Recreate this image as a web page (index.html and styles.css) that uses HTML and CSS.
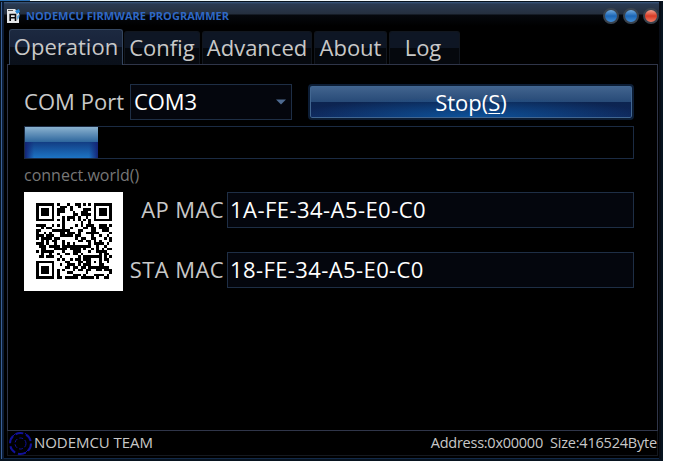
FILE: index.html
```html
<!DOCTYPE html>
<html lang="en">
<head>
<meta charset="utf-8">
<title>NODEMCU FIRMWARE PROGRAMMER</title>
<link rel="stylesheet" href="styles.css">
</head>
<body>
<div class="desktop"></div>
<main class="window">
  <header class="titlebar">
    <svg class="app-icon" width="14" height="15" viewBox="0 0 14 15">
      <path fill="#e4e6e8" d="M0 0h8l4 4v10H0z"/>
      <path fill="#2686d6" d="M8 2l4-2 1 3-3 2z"/>
      <path fill="#65a9dc" d="M10 7l3-2-1 4-2 2z"/>
      <path stroke="#555" d="M1 1.5h5" fill="none"/>
      <path stroke="#08090c" stroke-width="1.6" d="M3.2 12V5.5h5.3V12M3 8.8h5.5" fill="none"/>
    </svg>
    <h1 class="title">NODEMCU FIRMWARE PROGRAMMER</h1>
    <div class="controls"><i class="dot"></i><i class="dot"></i><i class="dot dot-close"></i></div>
  </header>
  <nav class="tabs">
    <span class="tab tab-active">Operation</span>
    <span class="tab tab-config">Config</span>
    <span class="tab tab-advanced">Advanced</span>
    <span class="tab tab-about">About</span>
    <span class="tab tab-log">Log</span>
  </nav>
  <section class="panel">
    <div class="port-row">
      <label class="port-label">COM Port</label>
      <div class="field select"><span class="com">COM3</span><svg width="10" height="6" viewBox="0 0 10 6"><path d="M0 0.5h10L5 5.5z" fill="#4e6a90"/></svg></div>
      <button class="stop">Stop(<u>S</u>)</button>
    </div>
    <div class="progress"><div class="bar"></div></div>
    <p class="message">connect.world()</p>
    <div class="device">
      <div class="qr"><svg id="qr" width="76" height="76" viewBox="0 0 29 29" shape-rendering="crispEdges"><path fill="#000"/></svg></div>
      <div class="macs">
        <div class="mac-row"><label class="ap">AP MAC</label><div class="field mac">1A-FE-34-A5-E0-C0</div></div>
        <div class="mac-row"><label>STA MAC</label><div class="field mac sta">18-FE-34-A5-E0-C0</div></div>
      </div>
    </div>
  </section>
  <footer class="status">
    <svg class="logo" width="25" height="25" viewBox="0 0 25 25" fill="none" stroke="#11119a">
      <circle cx="12.5" cy="12.5" r="10.5" stroke-width="2" stroke-dasharray="8 3"/>
      <circle cx="12.5" cy="12.5" r="5.5" stroke-dasharray="4 2"/>
      <path d="M2 8l5-5M17 2l5 6M22 17l-5 5M7 22l-5-5"/>
    </svg>
    <span class="team">NODEMCU TEAM</span>
    <span class="address">Address:0x00000</span>
    <span class="size">Size:416524Byte</span>
  </footer>
</main>
<script src="qr.js"></script>
</body>
</html>
```
FILE: styles.css
```css
* { box-sizing: border-box; }
body {
  margin: 0;
  width: 673px;
  height: 461px;
  overflow: hidden;
  background: #fff;
  font-family: "Open Sans", "Noto Sans", sans-serif;
  font-size: 22px;
  color: #c8c8c8;
}
.desktop { height: 1px; background: linear-gradient(90deg, #2c70b4 30px, #e6f3f8 30px, #fff 663px); }
.window {
  display: flex;
  flex-direction: column;
  width: 663px;
  height: 460px;
  padding: 0 3px 3px 6px;
  border: solid #07131f;
  border-width: 1px 2px 2px 1px;
  background: linear-gradient(#3b5a83 0, #2a3a52 2px, #252f3e 12px, #05080d 13px, #000 24px);
  box-shadow: inset 1px 0 #3a5f96, inset 3px 0 #0c1c34, inset -2px 0 #080d16, inset 0 -1px #122948;
}
.titlebar { display: flex; align-items: center; height: 27px; flex: none; }
.app-icon { margin: 1px 0 0; }
.title {
  flex: 1;
  margin: 0 0 0 5px;
  font-size: 11px;
  font-weight: 700;
  letter-spacing: .03px;
  color: #2f68c4;
  white-space: nowrap;
}
.controls { display: flex; gap: 4px; }
.dot {
  width: 16px;
  height: 16px;
  border: 2px solid #3a434e;
  border-radius: 50%;
  background: linear-gradient(#73abdf, #1c66b6 50%, #428dd6);
}
.dot:first-child { margin-left: 0; }
.controls { margin-right: -1px; }
.dot-close { background: linear-gradient(#f3a18f, #d93b25 50%, #f17c66); }
.tabs { display: flex; align-items: flex-end; height: 35px; gap: 2px; padding-left: 2px; line-height: 30px; flex: none; }
.tab {
  height: 33px;
  text-align: center;
  white-space: nowrap;
  border: 1px solid #11161e;
  border-bottom: 0;
  border-radius: 3px 3px 0 0;
  background: linear-gradient(#0e1624 50%, #05080d 50%);
}
.tab-active {
  width: 114px;
  height: 36px;
  margin-bottom: -1px;
  line-height: 32px;
  border-color: #34465f;
  background: linear-gradient(#1c2940 0, #18233a 50%, #0b111c 50%, #0a101a);
  z-index: 1;
}
.tab-config { width: 76px; margin-left: -1px; }
.tab-advanced { width: 110px; }
.tab-about { width: 73px; }
.tab-log { width: 71px; padding-right: 3px; }
.panel { flex: 1; padding: 19px 23px 0 16px; border: 1px solid #2f3549; min-height: 0; }
.port-row { display: flex; height: 36px; }
.port-label { width: 106px; line-height: 35px; letter-spacing: .05px; }
.field { height: 36px; border: 1px solid #1e2e45; background: #04060d; color: #fff; line-height: 33px; padding-left: 3px; white-space: nowrap; }
.select { display: flex; align-items: center; justify-content: space-between; width: 162px; padding-right: 5px; }
.com { letter-spacing: -.1px; margin-top: -2px; }
.stop {
  width: 326px;
  height: 36px;
  margin-left: 16px;
  padding: 0 0 1px;
  border: 2px solid #0c1d35;
  border-radius: 4px;
  font: inherit;
  line-height: 30px;
  color: #fff;
  background: radial-gradient(ellipse 55% 65% at 50% 100%, #0d549c, transparent), linear-gradient(#43658f, #274a77 50%, #0c2450 50%, #10265a);
  box-shadow: inset 0 0 0 1px #416691;
}
.stop u { text-decoration-thickness: 1px; text-underline-offset: 2px; }
.progress { height: 33px; margin-top: 6px; border: 1px solid #1b2b43; }
.bar {
  width: 73px;
  height: 31px;
  background: linear-gradient(#8bb2cf, #2d669d 15px, transparent 15px), linear-gradient(90deg, #142476, transparent 9px 64px, #142476), linear-gradient(#123d83 15px, #1d74c4);
}
.message { margin: 4px 0 0; height: 29px; font-size: 16px; line-height: 25px; color: #777; }
.device { display: flex; }
.qr { width: 99px; height: 99px; padding: 11px 12px; background: #fff; }
.qr svg { display: block; }
.macs { flex: 1; display: flex; flex-direction: column; gap: 24px; }
.mac-row { display: flex; justify-content: flex-end; line-height: 34px; letter-spacing: .4px; white-space: nowrap; }
.mac-row label { margin-right: 3px; }
.mac { width: 407px; padding-left: 2px; letter-spacing: .45px; }
.sta { letter-spacing: .4px; }
.status { display: flex; align-items: center; height: 25px; flex: none; border: solid #14181f; border-width: 0 1px 1px; font-size: 15px; }
.status span { position: relative; top: -1px; }
.team { margin: 0 auto 0 1px; letter-spacing: -.05px; }
.address { font-size: 14.5px; letter-spacing: -.25px; margin-right: 7px; }
.size { font-size: 14.5px; letter-spacing: -.2px; }
```
FILE: qr.js
```js
// Version 3-L QR symbol (29x29), byte mode.
(function () {
  var text = "AP MAC:1A-FE-34-A5-E0-C0 STA MAC:18-FE-34-A5-E0-C0";
  var N = 29, DATA = 55, EC = 15, i, j, x, y;
  var bits = [];
  function push(v, n) { for (var k = n - 1; k >= 0; k--) bits.push((v >> k) & 1); }
  push(4, 4); push(text.length, 8);
  for (i = 0; i < text.length; i++) push(text.charCodeAt(i), 8);
  push(0, 4);
  for (var p = 0; bits.length < DATA * 8; p ^= 1) push(p ? 17 : 236, 8);
  var data = [];
  for (i = 0; i < bits.length; i += 8) data.push(parseInt(bits.slice(i, i + 8).join(""), 2));
  function mul(a, b) { var r = 0; for (; b; b >>= 1) { if (b & 1) r ^= a; a = (a << 1) ^ (a & 128 ? 285 : 0); } return r; }
  var gen = [1], root = 1;
  for (i = 0; i < EC; i++) {
    var next = gen.concat(0);
    for (j = 0; j < gen.length; j++) next[j + 1] ^= mul(gen[j], root);
    gen = next; root = mul(root, 2);
  }
  var rem = data.concat(new Array(EC).fill(0));
  for (i = 0; i < DATA; i++) { var f = rem[i]; for (j = 0; j <= EC; j++) rem[i + j] ^= mul(gen[j], f); }
  var words = data.concat(rem.slice(DATA));
  function build(mask) {
    var m = [], fixed = [];
    for (y = 0; y < N; y++) { m.push(new Array(N).fill(0)); fixed.push(new Array(N).fill(0)); }
    function set(a, b, v) { if (a >= 0 && b >= 0 && a < N && b < N) { m[b][a] = v ? 1 : 0; fixed[b][a] = 1; } }
    for (i = 0; i < N; i++) { set(6, i, i % 2 === 0); set(i, 6, i % 2 === 0); }
    [[3, 3], [N - 4, 3], [3, N - 4]].forEach(function (c) {
      for (var dy = -4; dy <= 4; dy++) for (var dx = -4; dx <= 4; dx++) {
        var d = Math.max(Math.abs(dx), Math.abs(dy)); set(c[0] + dx, c[1] + dy, d !== 2 && d !== 4);
      }
    });
    for (y = -2; y <= 2; y++) for (x = -2; x <= 2; x++) set(22 + x, 22 + y, Math.max(Math.abs(x), Math.abs(y)) !== 1);
    var fmt = 8 | mask, r = fmt;
    for (i = 0; i < 10; i++) r = (r << 1) ^ ((r >> 9) * 1335);
    var fb = ((fmt << 10) | r) ^ 21522;
    function b(k) { return (fb >> k) & 1; }
    for (i = 0; i < 6; i++) set(8, i, b(i));
    set(8, 7, b(6)); set(8, 8, b(7)); set(7, 8, b(8));
    for (i = 9; i < 15; i++) set(14 - i, 8, b(i));
    for (i = 0; i < 8; i++) set(N - 1 - i, 8, b(i));
    for (i = 8; i < 15; i++) set(8, N - 15 + i, b(i));
    set(8, N - 8, 1);
    var tests = [
      function (a, c) { return (a + c) % 2; }, function (a, c) { return c % 2; },
      function (a) { return a % 3; }, function (a, c) { return (a + c) % 3; },
      function (a, c) { return (Math.floor(a / 3) + Math.floor(c / 2)) % 2; },
      function (a, c) { return a * c % 2 + a * c % 3; },
      function (a, c) { return (a * c % 2 + a * c % 3) % 2; },
      function (a, c) { return ((a + c) % 2 + a * c % 3) % 2; }];
    var n = 0;
    for (var right = N - 1; right >= 1; right -= 2) {
      if (right === 6) right = 5;
      for (var v = 0; v < N; v++) for (j = 0; j < 2; j++) {
        x = right - j; y = ((right + 1) & 2) === 0 ? N - 1 - v : v;
        if (!fixed[y][x]) {
          var bit = n < words.length * 8 ? (words[n >> 3] >> (7 - (n & 7))) & 1 : 0;
          m[y][x] = bit ^ (tests[mask](x, y) === 0 ? 1 : 0); n++;
        }
      }
    }
    return m;
  }
  function penalty(m) {
    var s = 0, dark = 0;
    for (var t = 0; t < 2; t++) for (var a = 0; a < N; a++) {
      var line = "";
      for (var c = 0; c < N; c++) line += t ? m[c][a] : m[a][c];
      (line.match(/0{5,}|1{5,}/g) || []).forEach(function (q) { s += q.length - 2; });
      for (c = 0; c <= N - 11; c++) { var q = line.substr(c, 11); if (q === "10111010000" || q === "00001011101") s += 40; }
    }
    for (y = 0; y < N; y++) for (x = 0; x < N; x++) {
      dark += m[y][x];
      if (y && x && m[y][x] === m[y - 1][x] && m[y][x] === m[y][x - 1] && m[y][x] === m[y - 1][x - 1]) s += 3;
    }
    return s + Math.floor(Math.abs(dark * 20 / N / N - 10)) * 10;
  }
  var best, low = Infinity;
  for (var k = 0; k < 8; k++) { var m = build(k), s = penalty(m); if (s < low) { low = s; best = m; } }
  var d = "";
  best.forEach(function (row, yy) { row.forEach(function (v, xx) { if (v) d += "M" + xx + " " + yy + "h1v1h-1z"; }); });
  document.querySelector("#qr path").setAttribute("d", d);
})();
```
